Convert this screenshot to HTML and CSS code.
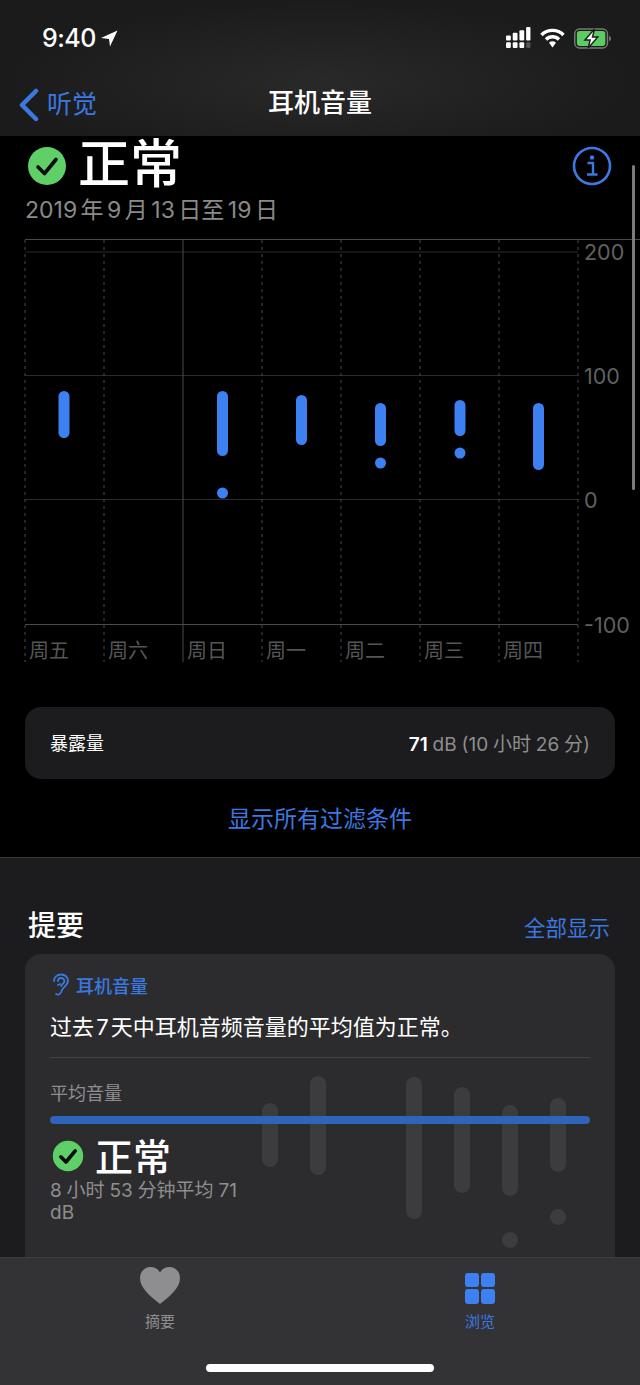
FILE: index.html
```html
<!DOCTYPE html>
<html lang="zh-CN">
<head>
    <meta charset="UTF-8">
    <meta name="viewport" content="width=device-width, initial-scale=1.0">
    <title>耳机音量</title>
    <link rel="stylesheet" href="styles.css">
</head>
<body>

<div class="screen">
    <header class="top">
        <div class="status">
            <div class="clock">
                <span>9:40</span>
                <svg width="17" height="17" viewBox="0 0 17 17"><path d="M16.5 .5 L0 8 L8 9 L9 16.5 Z" fill="#fff"/></svg>
            </div>
            <div class="status-icons">
                <svg width="26" height="22" viewBox="0 0 27 23">
                    <g fill="#fff">
                        <rect x="1" y="9" width="5" height="5" rx="1"/><rect x="1" y="16" width="5" height="6" rx="1"/>
                        <rect x="8" y="6" width="5" height="8" rx="1"/><rect x="8" y="16" width="5" height="6" rx="1"/>
                        <rect x="15" y="3.500" width="5" height="10.500" rx="1"/><rect x="15" y="16" width="5" height="6" rx="1"/>
                        <rect x="22" y="0" width="4.500" height="14" rx="1"/>
                    </g>
                    <rect x="22" y="16" width="4.500" height="6" rx="1" fill="#555"/>
                </svg>
                <svg width="25" height="20" viewBox="0 0 25 20">
                    <g fill="none" stroke="#fff" stroke-width="3.400">
                        <path d="M1.500 7 A15.500 15.500 0 0 1 23.500 7"/>
                        <path d="M6 11.500 A9 9 0 0 1 19 11.500"/>
                    </g>
                    <path d="M9 14.800 A5 5 0 0 1 16 14.800 L12.500 19.500 Z" fill="#fff"/>
                </svg>
                <svg width="38" height="21" viewBox="0 0 40 22">
                    <rect x=".8" y="1" width="34.400" height="20" rx="5" fill="none" stroke="#7a7a7a" stroke-width="1.500"/>
                    <rect x="3" y="3.200" width="30" height="15.600" rx="3" fill="#5ccb63"/>
                    <path d="M37 8 q2 1 2 3 t-2 3 Z" fill="#7a7a7a"/>
                    <path d="M21.500 1 L11.500 12.500 H17 L15 21 L25 9.500 H19.500 Z" fill="#fff" stroke="#1c1c1c" stroke-width="1.500"/>
                </svg>
            </div>
        </div>
        <nav class="navbar">
            <a class="back">
                <svg width="20" height="34" viewBox="0 0 20 34"><path d="M17 3 L3 17 L17 31" fill="none" stroke="#3b78e0" stroke-width="4.500" stroke-linecap="round" stroke-linejoin="round"/></svg>
                <span>听觉</span>
            </a>
            <h1>耳机音量</h1>
        </nav>
    </header>

    <main class="content">
        <section class="dark">
            <div class="hero">
                <div class="hero-title">
                    <svg class="check" width="40" height="40" viewBox="0 0 40 40"><circle cx="20" cy="20" r="19" fill="#5fd068"/><path d="M11 21 L17.500 27.500 L29 13.500" fill="none" stroke="#0b0b0b" stroke-width="3.600" stroke-linecap="round" stroke-linejoin="round"/></svg>
                    <span>正常</span>
                </div>
                <svg class="info" width="40" height="40" viewBox="0 0 40 40">
                    <circle cx="20" cy="20" r="18" fill="none" stroke="#3b78e0" stroke-width="2.600"/>
                    <circle cx="20" cy="11.500" r="2.200" fill="#3b78e0"/>
                    <path d="M15.500 17 H21 V28 M15 28.500 H25.500" fill="none" stroke="#3b78e0" stroke-width="2.400"/>
                </svg>
            </div>
            <p class="dates">2019 年 9 月 13 日至 19 日</p>

            <svg class="chart" width="640" height="426" viewBox="0 0 640 426">
                <!-- 0 = y 237 on the page -->
                <g class="grid">
                    <line x1="25" y1="2.500" x2="640" y2="2.500" class="line-top"/>
                    <line x1="25" y1="15" x2="578" y2="15"/>
                    <line x1="25" y1="138.500" x2="578" y2="138.500"/>
                    <line x1="25" y1="262.500" x2="578" y2="262.500"/>
                    <line x1="25" y1="387.500" x2="578" y2="387.500" class="line-low"/>
                </g>
                <g class="days">
                    <line x1="25" y1="3" x2="25" y2="425"/>
                    <line x1="104" y1="3" x2="104" y2="425"/>
                    <line x1="262" y1="3" x2="262" y2="425"/>
                    <line x1="341" y1="3" x2="341" y2="425"/>
                    <line x1="420" y1="3" x2="420" y2="425"/>
                    <line x1="499" y1="3" x2="499" y2="425"/>
                    <line x1="578" y1="3" x2="578" y2="425"/>
                </g>
                <line x1="183" y1="3" x2="183" y2="425" class="week-start"/>
                <g class="marks">
                    <rect x="58.500" y="154" width="11" height="47" rx="5.500"/>
                    <rect x="217" y="154" width="11" height="65" rx="5.500"/>
                    <circle cx="222.500" cy="256" r="5.500"/>
                    <rect x="296" y="158" width="11" height="50" rx="5.500"/>
                    <rect x="375" y="166" width="11" height="43" rx="5.500"/>
                    <circle cx="380.500" cy="226" r="5.500"/>
                    <rect x="454.500" y="163" width="11" height="36" rx="5.500"/>
                    <circle cx="460" cy="216" r="5.500"/>
                    <rect x="533" y="166" width="11" height="67" rx="5.500"/>
                </g>
                <g class="y-labels">
                    <text x="584" y="23">200</text>
                    <text x="584" y="147">100</text>
                    <text x="584" y="271">0</text>
                    <text x="584" y="396">-100</text>
                </g>
                <g class="x-labels">
                    <text x="29" y="421">周五</text>
                    <text x="108" y="421">周六</text>
                    <text x="187" y="421">周日</text>
                    <text x="266" y="421">周一</text>
                    <text x="345" y="421">周二</text>
                    <text x="424" y="421">周三</text>
                    <text x="503" y="421">周四</text>
                </g>
            </svg>

            <div class="exposure">
                <span class="exposure-name">暴露量</span>
                <span class="exposure-value"><b>71</b> dB (10 小时 26 分)</span>
            </div>
            <a class="show-filters">显示所有过滤条件</a>
            <div class="scrollbar"></div>
        </section>

        <section class="summary">
            <div class="summary-head">
                <h2>提要</h2>
                <a>全部显示</a>
            </div>
            <div class="card">
                <svg class="ghost" width="350" height="190" viewBox="-30 0 350 190">
                    <!-- 0,0 = 290,1070 on the page -->
                    <g fill="#3c3c3e">
                        <rect x="-28" y="33" width="16" height="64" rx="8"/>
                        <rect x="20" y="6" width="16" height="99" rx="8"/>
                        <rect x="116" y="7" width="16" height="142" rx="8"/>
                        <rect x="164" y="17" width="16" height="106" rx="8"/>
                        <rect x="212" y="35" width="16" height="91" rx="8"/>
                        <circle cx="220" cy="170" r="8"/>
                        <rect x="260" y="28" width="16" height="74" rx="8"/>
                        <circle cx="268" cy="147" r="8"/>
                    </g>
                </svg>
                <div class="card-tag">
                    <svg width="18" height="24" viewBox="0 0 18 24" fill="none" stroke="#3b78e0" stroke-width="1.800" stroke-linecap="round"><path d="M4 21 C7 23 9 20 10 17 C11 14 16 12 16 8 C16 4 13 1.500 9 1.500 C5 1.500 2 4.500 2 8"/><path d="M6 8 C6 6 7.500 5 9 5 C11 5 12.500 6.500 12.500 8 C12.500 10 10 11 9 13"/><path d="M6 12 L8 11"/></svg>
                    <span>耳机音量</span>
                </div>
                <p class="card-text">过去 7 天中耳机音频音量的平均值为正常。</p>
                <hr class="card-rule">
                <p class="avg-label">平均音量</p>
                <div class="avg-bar"></div>
                <div class="avg-title">
                    <svg width="32" height="32" viewBox="0 0 40 40"><circle cx="20" cy="20" r="19" fill="#5fd068"/><path d="M11 21 L17.500 27.500 L29 13.500" fill="none" stroke="#0b0b0b" stroke-width="4.500" stroke-linecap="round" stroke-linejoin="round"/></svg>
                    <span>正常</span>
                </div>
                <p class="avg-note">8 小时 53 分钟平均 71 dB</p>
            </div>
        </section>
    </main>

    <footer class="tabbar">
        <div class="tabs">
            <a class="tab">
                <svg width="40" height="38" viewBox="0 0 40 38"><path d="M20 37 C10 29 0 21 0 11 C0 4.500 5 0 10.500 0 C14.500 0 18 2 20 5.500 C22 2 25.500 0 29.500 0 C35 0 40 4.500 40 11 C40 21 30 29 20 37 Z" fill="#8e8e90"/></svg>
                <span>摘要</span>
            </a>
            <a class="tab tab-on">
                <svg width="30" height="38" viewBox="0 0 30 38">
                    <g fill="#3d80f2">
                        <rect x="0" y="6" width="14" height="14" rx="3"/><rect x="16" y="6" width="14" height="14" rx="3"/>
                        <rect x="0" y="22" width="14" height="15" rx="3"/><rect x="16" y="22" width="14" height="15" rx="3"/>
                    </g>
                </svg>
                <span>浏览</span>
            </a>
        </div>
        <div class="home-bar"></div>
    </footer>
</div>

</body>
</html>
```

FILE: styles.css
```css
/* Page */
* {
    box-sizing: border-box;
}
body {
    margin: 0;
    background-color: #000;
    color: #fff;
    font-family: "Inter", "Noto Sans CJK SC", sans-serif;
}
h1, h2, p {
    margin: 0;
    font-weight: 400;
}
.screen {
    width: 640px;
    height: 1385px;
    display: flex;
    flex-direction: column;
    overflow: hidden;
}

/* Status bar + navigation */
.top {
    height: 136px;
    flex: none;
    background: radial-gradient(ellipse at 50% 60%, #292929 0%, #1b1b1b 70%);
}
.status {
    height: 76px;
    padding: 0 28px 0 42px;
    display: flex;
    justify-content: space-between;
    align-items: center;
}
.clock {
    display: flex;
    align-items: center;
    gap: 5px;
    font-size: 25px;
    font-weight: 500;
    letter-spacing: -0.5px;
}
.status-icons {
    display: flex;
    align-items: center;
    gap: 9px;
}
.navbar {
    height: 54px;
    position: relative;
    display: flex;
    align-items: center;
    justify-content: center;
}
.navbar h1 {
    font-size: 26px;
    font-weight: 500;
    line-height: 1;
}
.back {
    position: absolute;
    left: 19px;
    top: 6px;
    display: flex;
    align-items: center;
    gap: 8px;
    color: #3b78e0;
    font-size: 25px;
}
.back svg {
    margin-top: 6px;
}

/* Scrolling content */
.content {
    flex: 1;
    min-height: 0;
}
.dark {
    height: 721px;
    position: relative;
    background-color: #000;
}
.hero {
    height: 58px;
    padding: 2px 28px 0 27px;
    display: flex;
    justify-content: space-between;
    align-items: flex-start;
}
.hero-title {
    display: flex;
    align-items: center;
    gap: 11px;
    height: 56px;
    font-size: 52px;
    font-weight: 500;
    line-height: 1;
}
.hero-title span {
    margin-top: -3px;
}
.info {
    margin-top: 8px;
}
.dates {
    margin-left: 25px;
    color: #8a8a8a;
    font-size: 23px;
    line-height: 32px;
    word-spacing: -3px;
}

/* Chart */
.chart {
    display: block;
    margin-top: 11px;
}
.grid line {
    stroke: #2c2c2c;
    stroke-width: 1;
}
.grid .line-top {
    stroke: #4a4a4a;
}
.grid .line-low {
    stroke: #4a4a4a;
}
.days line {
    stroke: #4a4a4a;
    stroke-width: 1;
    stroke-dasharray: 3 4;
}
.week-start {
    stroke: #4a4a4a;
    stroke-width: 1;
}
.marks {
    fill: #3d80f2;
}
.y-labels text {
    fill: #606060;
    font-size: 21.500px;
}
.x-labels text {
    fill: #565656;
    font-size: 20px;
}

.exposure {
    margin: 44px 25px 0;
    height: 72px;
    padding: 0 25px 2px;
    display: flex;
    justify-content: space-between;
    align-items: center;
    background-color: #1c1c1e;
    border-radius: 16px;
    font-size: 18px;
}
.exposure-value {
    color: #8e8e8e;
    font-size: 19px;
    word-spacing: -0.500px;
}
.exposure-value b {
    color: #fff;
    font-weight: 600;
}
.show-filters {
    display: block;
    margin-top: 24px;
    text-align: center;
    color: #3b78e0;
    font-size: 23px;
    line-height: 32px;
}
.scrollbar {
    position: absolute;
    right: 5px;
    top: 29px;
    width: 3px;
    height: 325px;
    border-radius: 2px;
    background-color: #7c7c7c;
}

/* Summary */
.summary {
    height: 400px;
    padding: 0 25px;
    background-color: #1c1c1e;
    border-top: 1px solid #38383a;
    overflow: hidden;
}
.summary-head {
    height: 96px;
    padding: 36px 5px 0 3px;
    display: flex;
    justify-content: space-between;
    align-items: center;
}
.summary-head h2 {
    font-size: 28px;
    font-weight: 500;
}
.summary-head a {
    margin-top: 4px;
    color: #3b78e0;
    font-size: 21.500px;
}
.card {
    position: relative;
    height: 320px;
    padding: 18px 25px 0;
    background-color: #2c2c2e;
    border-radius: 16px;
    overflow: hidden;
}
.ghost {
    position: absolute;
    left: 235px;
    top: 116px;
}
.card-tag {
    position: relative;
    display: flex;
    align-items: center;
    gap: 6px;
    height: 26px;
    padding-left: 2px;
    color: #3b78e0;
    font-size: 18px;
    font-weight: 500;
}
.card-text {
    position: relative;
    margin-top: 13px;
    font-size: 22px;
    line-height: 32px;
    word-spacing: -4px;
}
.card-rule {
    position: relative;
    margin: 14px 0 0;
    border: 0;
    border-top: 1px solid #424244;
}
.avg-label {
    position: relative;
    margin-top: 23px;
    color: #8e8e8e;
    font-size: 18px;
    line-height: 26px;
}
.avg-bar {
    position: relative;
    margin-top: 9px;
    height: 8px;
    border-radius: 4px;
    background-color: #2f65b8;
}
.avg-title {
    position: relative;
    margin-top: 9px;
    display: flex;
    align-items: center;
    gap: 11px;
    padding-left: 2px;
    height: 46px;
    font-size: 38px;
    font-weight: 500;
}
.avg-title span {
    margin-top: -4px;
}
.avg-note {
    position: relative;
    width: 195px;
    margin-top: 1px;
    color: #8e8e8e;
    font-size: 19px;
    line-height: 22px;
    word-spacing: -0.500px;
}

/* Tab bar */
.tabbar {
    height: 128px;
    flex: none;
    background-color: #333335;
    border-top: 1px solid #3d3d3f;
}
.tabs {
    display: flex;
    padding-top: 9px;
}
.tab {
    width: 320px;
    display: flex;
    flex-direction: column;
    align-items: center;
    gap: 6px;
    color: #8e8e90;
    font-size: 15px;
    line-height: 22px;
}
.tab-on {
    color: #3b78e0;
}
.home-bar {
    width: 228px;
    height: 8px;
    margin: 31px auto 0;
    border-radius: 4px;
    background-color: #fff;
}
```
